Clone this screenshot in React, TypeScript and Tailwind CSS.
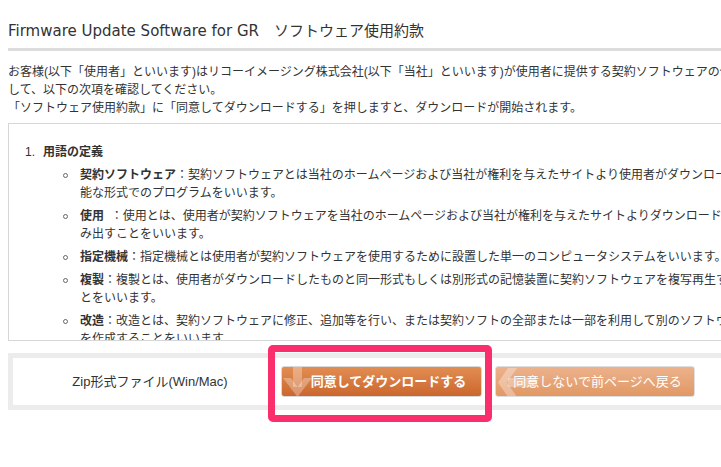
const items = [
  {
    term: "契約ソフトウェア",
    lines: [
      "：契約ソフトウェアとは当社のホームページおよび当社が権利を与えたサイトより使用者がダウンロード可",
      "能な形式でのプログラムをいいます。",
    ],
  },
  {
    term: "使用",
    lines: [
      "\u00a0\u00a0：使用とは、使用者が契約ソフトウェアを当社のホームページおよび当社が権利を与えたサイトよりダウンロードし、読",
      "み出すことをいいます。",
    ],
  },
  {
    term: "指定機械",
    lines: ["：指定機械とは使用者が契約ソフトウェアを使用するために設置した単一のコンピュータシステムをいいます。"],
  },
  {
    term: "複製",
    lines: [
      "：複製とは、使用者がダウンロードしたものと同一形式もしくは別形式の記憶装置に契約ソフトウェアを複写再生するこ",
      "とをいいます。",
    ],
  },
  {
    term: "改造",
    lines: [
      "：改造とは、契約ソフトウェアに修正、追加等を行い、または契約ソフトの全部または一部を利用して別のソフトウェア",
      "を作成することをいいます。",
    ],
  },
];

const App = () => {
  return (
    <div className="w-[721px] h-[467px] overflow-hidden bg-white text-[#333] font-['Liberation_Sans','Noto_Sans_CJK_JP',sans-serif]">
      <div className="w-[800px] pl-2">
        <h1 className="pt-[21px] text-[15px] leading-[20px] whitespace-nowrap font-['DejaVu_Sans','Noto_Sans_CJK_JP',sans-serif]">
          Firmware Update Software for GR　ソフトウェア使用約款
        </h1>
        <div className="mt-[7px] h-[3px] bg-[#dcdcdc]"></div>

        <div className="mt-[12px] text-[12px] leading-[18px] whitespace-nowrap">
          <p>お客様(以下「使用者」といいます)はリコーイメージング株式会社(以下「当社」といいます)が使用者に提供する契約ソフトウェアの使用に関</p>
          <p>して、以下の次項を確認してください。</p>
          <p>「ソフトウェア使用約款」に「同意してダウンロードする」を押しますと、ダウンロードが開始されます。</p>
        </div>

        <div className="mt-[6px] h-[218px] overflow-hidden border border-[#d6d6d6] pl-[16px] pt-[19px] text-[12px] leading-[18px] whitespace-nowrap">
          <div className="flex">
            <span className="w-[18px]">1.</span>
            <span className="font-bold">用語の定義</span>
          </div>
          <ul className="pl-[38px]">
            {items.map((item, idx) => (
              <li key={idx} className="mt-[5px] flex">
                <span className="w-[17px] h-[18px] flex items-center">
                  <span className="w-[5px] h-[5px] rounded-full border border-[#666]"></span>
                </span>
                <div>
                  {item.lines.map((line, i) => (
                    <p key={i}>
                      {i === 0 && <b>{item.term}</b>}
                      {line}
                    </p>
                  ))}
                </div>
              </li>
            ))}
          </ul>
        </div>

        <div className="relative mt-[12px] bg-[#ececec] p-[5px]">
          <div className="h-[47px] bg-white flex items-center">
            <div className="w-[268px] pl-[6px] flex justify-center text-[13px]">Zip形式ファイル(Win/Mac)</div>
            <button className="relative w-[201px] h-[31px] rounded-[3px] border border-[#d9d9d9] overflow-hidden bg-linear-to-b from-[#e28d52] to-[#cb672e] text-white text-[13px] font-bold pl-[14px]">
              <svg className="absolute left-0 top-0" width="32" height="31" viewBox="0 0 32 31">
                <g fill="#fff" fillOpacity="0.3">
                  <rect x="11" y="0" width="9" height="20" />
                  <polygon points="1,11 9,11 15.5,20 22,11 30,11 15.5,30" />
                </g>
              </svg>
              <span className="relative">同意してダウンロードする</span>
            </button>
            <button className="relative ml-[13px] w-[200px] h-[31px] rounded-[3px] border border-[#dedede] overflow-hidden bg-linear-to-b from-[#ecb28c] to-[#e19864] text-white text-[13px] pl-[5px]">
              <svg className="absolute left-0 top-0" width="40" height="31" viewBox="0 0 40 31">
                <g fill="#fff" fillOpacity="0.32">
                  <rect x="12" y="11" width="28" height="9" />
                  <polygon points="12,1 21,1 11,15.5 21,30 12,30 2,15.5" />
                </g>
              </svg>
              <span className="relative">同意しないで前ページへ戻る</span>
            </button>
          </div>
          <div className="absolute left-[260px] top-[-8px] w-[224px] h-[77px] border-[7px] border-[#fa2e6d] rounded-[5px]"></div>
        </div>
      </div>
    </div>
  );
};

export default App;
